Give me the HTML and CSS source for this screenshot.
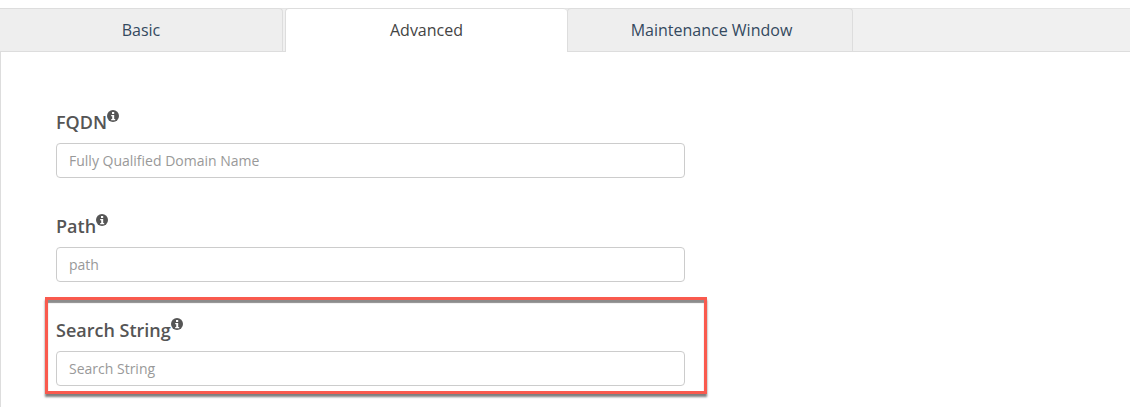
FILE: index.html
```html
<!DOCTYPE html>
<html lang="en">
<head>
  <meta charset="UTF-8">
  <title>Advanced</title>
  <link rel="stylesheet" href="styles.css">
</head>
<body>
  <div class="tabs">
    <div class="tab tab-first">Basic</div>
    <div class="tab tab-active">Advanced</div>
    <div class="tab tab-last">Maintenance Window</div>
  </div>

  <div class="panel">
    <div class="form-group">
      <label class="form-label">FQDN<svg class="info" viewBox="0 0 12 12"><circle cx="6" cy="6" r="6" fill="#555"/><rect x="5" y="2" width="2.2" height="2" fill="#fff"/><path d="M4.2 5h3v4h1v1.2H4.2V9h1V6.200H4.200z" fill="#fff"/></svg></label>
      <input class="form-control" type="text" placeholder="Fully Qualified Domain Name">
    </div>

    <div class="form-group">
      <label class="form-label">Path<svg class="info" viewBox="0 0 12 12"><circle cx="6" cy="6" r="6" fill="#555"/><rect x="5" y="2" width="2.2" height="2" fill="#fff"/><path d="M4.2 5h3v4h1v1.2H4.2V9h1V6.200H4.200z" fill="#fff"/></svg></label>
      <input class="form-control" type="text" placeholder="path">
    </div>

    <div class="highlight">
      <label class="form-label">Search String<svg class="info" viewBox="0 0 12 12"><circle cx="6" cy="6" r="6" fill="#555"/><rect x="5" y="2" width="2.2" height="2" fill="#fff"/><path d="M4.2 5h3v4h1v1.2H4.2V9h1V6.200H4.200z" fill="#fff"/></svg></label>
      <input class="form-control" type="text" placeholder="Search String">
    </div>
  </div>
</body>
</html>
```

FILE: styles.css
```css
* {
  box-sizing: border-box;
  margin: 0;
  padding: 0;
}

body {
  font-family: 'Open Sans', 'Noto Sans', sans-serif;
  background-color: #fff;
  padding-top: 8px;
  height: 407px;
  overflow: hidden;
}

.tabs {
  display: flex;
  height: 44px;
  background-color: #f0f0f0;
  border-top: 1px solid #e4e4e4;
  border-bottom: 1px solid #ddd;
}

.tab {
  height: 43px;
  margin-top: -1px;
  font-size: 16px;
  line-height: 42px;
  text-align: center;
  color: #34495e;
  background-color: #eee;
  border: 1px solid #ddd;
  border-bottom: none;
  border-radius: 4px 4px 0 0;
}

.tab-first {
  width: 283px;
  border-left: none;
  border-top-left-radius: 0;
}

.tab-active {
  width: 282px;
  height: 44px;
  margin-left: 2px;
  color: #444;
  background-color: #fff;
  border-right: none;
}

.tab-last {
  width: 286px;
  padding-left: 3px;
}

.panel {
  height: 356px;
  padding: 56px 0 0 55px;
  border-left: 1px solid #ddd;
}

.form-group {
  width: 629px;
  margin-bottom: 34px;
}

.form-label {
  display: block;
  height: 35px;
  padding-top: 2px;
  font-size: 18px;
  line-height: 24px;
  font-weight: 600;
  color: #555;
}

.info {
  width: 12px;
  height: 12px;
  vertical-align: 7px;
}

.form-control {
  display: block;
  width: 629px;
  height: 35px;
  padding: 0 12px;
  font-family: inherit;
  font-size: 14px;
  border: 1px solid #ccc;
  border-radius: 4px;
  background-color: #fff;
}

.form-control::placeholder {
  color: #999;
  opacity: 1;
}

.highlight {
  width: 662px;
  height: 97px;
  margin: -19px 0 0 -11px;
  padding: 16px 0 0 8px;
  border: 3px solid #f95a4e;
  box-shadow: 0 3px 2px rgba(0, 0, 0, 0.5), inset 0 3px 1px rgba(0, 0, 0, 0.45);
}
```
